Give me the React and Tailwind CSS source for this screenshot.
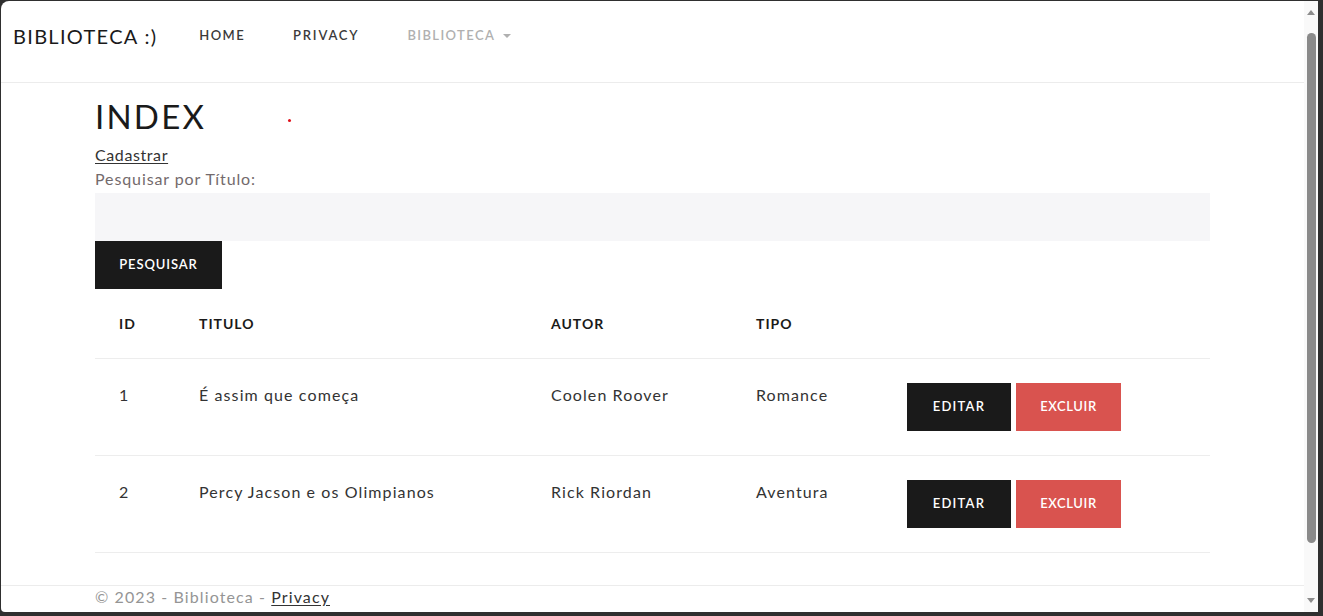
import React from 'react';

const books = [
  { id: 1, titulo: 'É assim que começa', autor: 'Coolen Roover', tipo: 'Romance' },
  { id: 2, titulo: 'Percy Jacson e os Olimpianos', autor: 'Rick Riordan', tipo: 'Aventura' },
];

const font = { fontFamily: 'Lato, "Noto Sans", sans-serif' };

const Navbar = () => (
  <nav className="h-[82px] shrink-0 border-b border-[#ececec] flex items-start">
    <div className="flex items-center h-[70px] pl-3">
      <span className="text-[20px] text-[#1a1a1a] tracking-[1.3px] mr-[42px]">BIBLIOTECA :)</span>
      <a className="text-[13px] font-semibold tracking-[1.4px] text-[#3a3a3a] mr-[48px]">HOME</a>
      <a className="text-[13px] font-semibold tracking-[1.8px] text-[#3a3a3a] mr-[48px]">PRIVACY</a>
      <a className="text-[13px] font-semibold tracking-[1.4px] text-[#b0b0b0] flex items-center">
        BIBLIOTECA
        <span className="ml-[8px] w-0 h-0 border-l-[4px] border-r-[4px] border-t-[4px] border-l-transparent border-r-transparent border-t-[#b0b0b0]" />
      </a>
    </div>
  </nav>
);

const Scrollbar = () => (
  <div className="w-[14px] shrink-0 bg-[#f9f9f9] flex flex-col items-center pt-[9px] pb-[9px]">
    <span className="w-0 h-0 border-l-[4px] border-r-[4px] border-b-[5px] border-l-transparent border-r-transparent border-b-[#8c8c8c]" />
    <div className="w-[9px] h-[510px] mt-[18px] rounded-full bg-[#8a8a8a]" />
    <div className="flex-1" />
    <span className="w-0 h-0 border-l-[4px] border-r-[4px] border-t-[5px] border-l-transparent border-r-transparent border-t-[#8c8c8c]" />
  </div>
);

export default function App() {
  return (
    <div className="w-[1323px] h-[616px] bg-[#2f2f2f] pt-px pl-px pr-[5px] pb-[4px]" style={font}>
      <div className="w-full h-full bg-white rounded-tl-[8px] rounded-bl-[4px] flex overflow-hidden">
        <div className="flex-1 flex flex-col overflow-hidden">
          <Navbar />

          <main className="px-[94px] pt-[13px]">
            <div className="flex items-start">
              <h1 className="text-[33px] leading-[40px] tracking-[2.2px] text-[#1a1a1a]">INDEX</h1>
              <span className="ml-[82px] mt-[23px] w-[3px] h-[3px] rounded-full bg-[#e0101a]" />
            </div>
            <a className="block mt-[9px] text-[16px] leading-[20px] text-[#333] underline underline-offset-2 tracking-[0.6px]">Cadastrar</a>
            <label className="block mt-[4px] text-[16px] leading-[20px] text-[#736a6c] tracking-[0.9px]">Pesquisar por Título:</label>
            <div className="mt-[4px] h-[48px] bg-[#f6f6f8]" />
            <button className="h-[48px] w-[127px] bg-[#1a1a1a] text-white text-[13px] font-semibold tracking-[0.9px]">PESQUISAR</button>

            <table className="w-full border-collapse">
              <thead>
                <tr className="border-b border-[#ededed] text-[14px] font-bold tracking-[1px] text-[#1a1a1a]">
                  <th className="text-left px-6 py-6 leading-[21px] w-[104px]">ID</th>
                  <th className="text-left py-6 leading-[21px] w-[352px]">TITULO</th>
                  <th className="text-left py-6 leading-[21px] w-[205px]">AUTOR</th>
                  <th className="text-left py-6 leading-[21px] w-[151px]">TIPO</th>
                  <th />
                </tr>
              </thead>
              <tbody>
                {books.map((b) => (
                  <tr key={b.id} className="border-b border-[#ededed] text-[16px] text-[#333] tracking-[1.1px] align-top">
                    <td className="px-6 py-6 leading-[24px]">{b.id}</td>
                    <td className="py-6 leading-[24px]">{b.titulo}</td>
                    <td className="py-6 leading-[24px]">{b.autor}</td>
                    <td className="py-6 leading-[24px]">{b.tipo}</td>
                    <td className="pt-[24px] pb-[24px]">
                      <div className="flex gap-[5px]">
                        <button className="h-[48px] w-[104px] bg-[#1a1a1a] text-white text-[13px] font-semibold tracking-[1.2px]">EDITAR</button>
                        <button className="h-[48px] w-[105px] bg-[#d9534f] text-white text-[13px] font-semibold tracking-[0.6px]">EXCLUIR</button>
                      </div>
                    </td>
                  </tr>
                ))}
              </tbody>
            </table>
          </main>

          <footer className="mt-[32px] border-t border-[#ececec] px-[94px] pt-[1px]">
            <p className="text-[16px] leading-[20px] text-[#959595] tracking-[1.1px]">
              © 2023 - Biblioteca - <a className="text-[#333] underline underline-offset-2">Privacy</a>
            </p>
          </footer>
        </div>
        <Scrollbar />
      </div>
    </div>
  );
}
